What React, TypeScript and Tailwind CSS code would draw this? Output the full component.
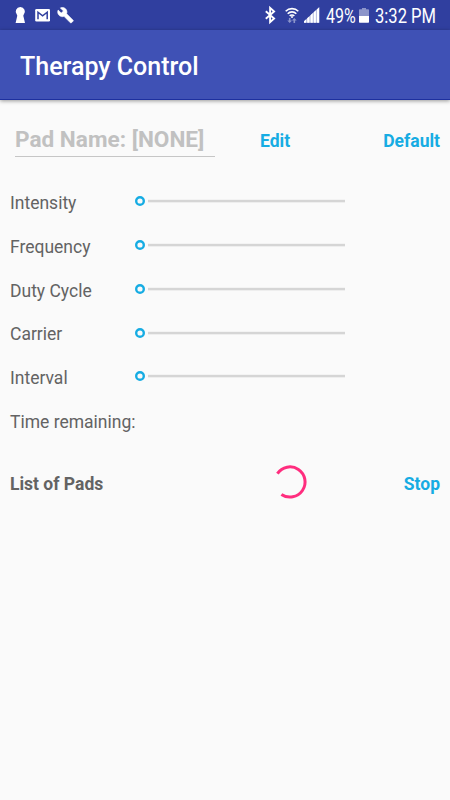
import React from 'react';

const settings = ['Intensity', 'Frequency', 'Duty Cycle', 'Carrier', 'Interval'];

function NotificationIcons() {
  return (
    <svg width="64" height="30" viewBox="12 0 64 30" fill="#fff">
      <path d="M20.300 7a4.600 4.600 0 0 1 3.500 7.600c-.6.800-.5 1.500-.2 2.400l1.400 6h-9.400l1.400-6c.3-.9.4-1.600-.2-2.400A4.600 4.600 0 0 1 20.300 7z" />
      <rect x="35.200" y="9" width="14.800" height="12.600" rx="1.300" />
      <path d="M38 19.200v-7l4.600 3.700 4.600-3.700v7" fill="none" stroke="#303f9f" strokeWidth="1.500" />
      <g transform="translate(57 6.700) scale(.71)">
        <path d="M22.700 19l-9.100-9.100c.9-2.300.4-5-1.500-6.900-2-2-5-2.400-7.400-1.300L9 6 6 9 1.600 4.700C.4 7.100.9 10.100 2.900 12.100c1.900 1.900 4.600 2.400 6.900 1.500l9.100 9.100c.4.4 1 .4 1.400 0l2.300-2.300c.5-.4.5-1.100.1-1.400z" stroke="#fff" strokeWidth=".8" />
      </g>
    </svg>
  );
}

function SignalIcons() {
  return (
    <svg width="60" height="30" viewBox="262 0 60 30" fill="none" stroke="#fff">
      <path d="M265.800 11.300l8.300 7.200-4 3.700V7.800l4 3.700-8.300 7.200" strokeWidth="1.900" />
      <path d="M285.700 11.300a8.700 8.700 0 0 1 12.600 0M287.700 13.700a6 6 0 0 1 8.600 0M289.700 16a3.200 3.200 0 0 1 4.600 0" strokeWidth="1.600" />
      <circle cx="292" cy="17" r="1" fill="#fff" stroke="none" />
      <g fill="#8c95ca" stroke="none">
        <path d="M289.700 23l-2.400-2.500h1.600V18h1.600v2.500h1.600zM294.300 18l2.400 2.500h-1.600V23h-1.600v-2.500h-1.600z" />
      </g>
      <g stroke="none">
        <path d="M304 22.800v-1.600L319.200 7.200v15.600z" fill="#aab1db" />
        <path d="M304 22.800v-1.600l2.200-2v3.600zM307.200 22.800v-4.500l2.300-2.100v6.600zM310.500 22.800v-7.500l2.300-2.200v9.700zM313.700 22.800V12.300l2.200-2v12.500zM316.800 22.800V9.400l2.400-2.200v15.600z" fill="#fff" />
      </g>
    </svg>
  );
}

function StatusBar() {
  return (
    <div className="flex h-[30px] items-center bg-[#303f9f] pl-3 text-[19.5px] leading-[30px] text-white">
      <NotificationIcons />
      <div className="ml-[186px] flex items-center">
        <SignalIcons />
        <div className="ml-1 h-[30px] w-[33px] whitespace-nowrap pt-[2px]">
          <span className="inline-block origin-left scale-x-[.82]">49%</span>
        </div>
        <svg width="10" height="30" viewBox="0 0 10 30">
          <path d="M3 8h4v1.300h2.300q.7 0 .7.700v6H0v-6q0-.7.700-.7H3z" fill="#8c95ca" />
          <path d="M0 16h10v6q0 .7-.7.700H.7Q0 22.700 0 22z" fill="#fff" />
        </svg>
        <div className="ml-[6px] h-[30px] w-[62px] whitespace-nowrap pt-[2px]">
          <span className="inline-block origin-left scale-x-[.85]">3:32 PM</span>
        </div>
      </div>
    </div>
  );
}

function SettingRow({ label }: { label: string }) {
  return (
    <div className="flex h-[43.8px] items-center">
      <span className="w-[125px] pt-[3.4px]">{label}</span>
      <svg width="10" height="10" viewBox="0 0 10 10">
        <circle cx="5" cy="5" r="3.800" fill="none" stroke="#16ace3" strokeWidth="2.400" />
      </svg>
      <svg className="ml-[2.5px]" width="197.5" height="4" viewBox="0 0 197.5 4">
        <rect y=".8" width="197.5" height="2.500" fill="#d5d5d5" />
      </svg>
    </div>
  );
}

export default function App() {
  return (
    <div className="h-[800px] w-[450px] overflow-hidden bg-[#fafafa] font-['Roboto',sans-serif] text-[17.5px] leading-5 text-[#636363]">
      <StatusBar />
      <header className="flex h-[70px] items-center border-b border-[#1d309f] bg-[#3f51b5] pl-5 pt-[5px] text-[25px] font-medium text-white shadow-[0_1px_4px_rgba(0,0,0,.4)]">
        Therapy Control
      </header>
      <main className="px-[10px] pt-[21.4px]">
        <div className="flex h-[58px] items-start font-bold text-[#16ace3]">
          <div className="ml-[5px] h-9 w-[200px] border-b border-[#c6c6c6] pt-[9px] text-[22.6px] text-[#c1c1c1]">
            Pad Name: [NONE]
          </div>
          <button className="ml-[45px] pt-[10px]">Edit</button>
          <button className="ml-auto pt-[10px]">Default</button>
        </div>
        {settings.map((label) => (
          <SettingRow key={label} label={label} />
        ))}
        <div className="h-[66px] pt-[14px]">Time remaining:</div>
        <div className="flex h-[36px] items-center font-bold">
          <span className="w-[264px] pt-[4px]">List of Pads</span>
          <svg width="34" height="36" viewBox="0 0 34 36">
            <path d="M3.400 9.600A15.100 15.100 0 1 1 7.400 30.400" fill="none" stroke="#ff2d7e" strokeWidth="3" />
          </svg>
          <button className="ml-auto pt-[4px] text-[#16ace3]">Stop</button>
        </div>
      </main>
    </div>
  );
}
